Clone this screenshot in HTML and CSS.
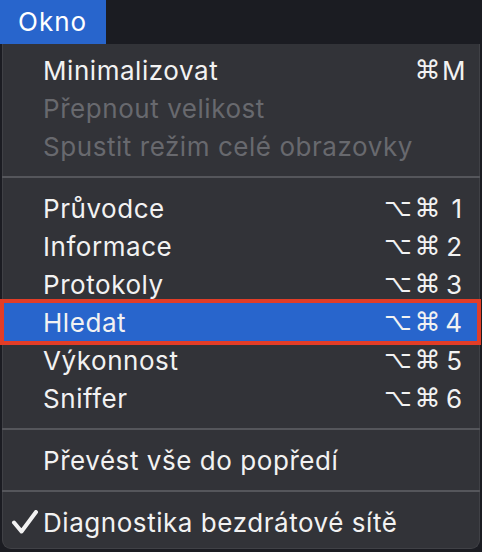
FILE: index.html
```html
<!DOCTYPE html>
<html lang="cs">
<head>
<meta charset="utf-8">
<title>Okno</title>
<link rel="stylesheet" href="styles.css">
</head>
<body>
<div class="menubar"><div class="menu-title">Okno</div></div>
<div class="menu">
  <div class="item"><span class="gutter"></span><span class="label">Minimalizovat</span><span class="keys"><span class="cmd">⌘</span><span class="key">M</span></span></div>
  <div class="item disabled"><span class="gutter"></span><span class="label">Přepnout velikost</span></div>
  <div class="item disabled"><span class="gutter"></span><span class="label">Spustit režim celé obrazovky</span></div>
  <div class="sep"></div>
  <div class="item"><span class="gutter"></span><span class="label">Průvodce</span><span class="keys"><span class="alt">⌥</span><span class="cmd">⌘</span><span class="key">1</span></span></div>
  <div class="item"><span class="gutter"></span><span class="label">Informace</span><span class="keys"><span class="alt">⌥</span><span class="cmd">⌘</span><span class="key">2</span></span></div>
  <div class="item"><span class="gutter"></span><span class="label">Protokoly</span><span class="keys"><span class="alt">⌥</span><span class="cmd">⌘</span><span class="key">3</span></span></div>
  <div class="item active"><span class="gutter"></span><span class="label">Hledat</span><span class="keys"><span class="alt">⌥</span><span class="cmd">⌘</span><span class="key">4</span></span></div>
  <div class="item"><span class="gutter"></span><span class="label">Výkonnost</span><span class="keys"><span class="alt">⌥</span><span class="cmd">⌘</span><span class="key">5</span></span></div>
  <div class="item"><span class="gutter"></span><span class="label">Sniffer</span><span class="keys"><span class="alt">⌥</span><span class="cmd">⌘</span><span class="key">6</span></span></div>
  <div class="sep"></div>
  <div class="item"><span class="gutter"></span><span class="label">Převést vše do popředí</span></div>
  <div class="sep"></div>
  <div class="item"><span class="gutter"><svg class="check" width="28" height="24" viewBox="0 0 28 24"><path d="M3 12.5 L10.5 21.5 L25 2" fill="none" stroke="#f2f2f2" stroke-width="4" stroke-linecap="round" stroke-linejoin="round"/></svg></span><span class="label">Diagnostika bezdrátové sítě</span></div>
</div>
</body>
</html>
```
FILE: styles.css
```css
html, body {
  margin: 0;
  padding: 0;
  background: #1b1c22;
  width: 482px;
  height: 552px;
  overflow: hidden;
  font-family: Inter, "Noto Sans", "DejaVu Sans", sans-serif;
  color: #f2f2f2;
}

.menubar {
  height: 44px;
  display: flex;
}

.menu-title {
  width: 106px;
  background: #2865cc;
  color: #ffffff;
  font-size: 26px;
  letter-spacing: 1px;
  line-height: 44px;
  box-sizing: border-box;
  padding-left: 18px;
}

.menu {
  margin: 0 2px;
  background: #323338;
  border: 1px solid #404146;
  border-top: none;
  border-radius: 0 0 9px 9px;
  padding: 7px 0 7px;
}

.item {
  height: 38px;
  display: flex;
  align-items: center;
  font-size: 26px;
  letter-spacing: 0.55px;
  padding-right: 17px;
}

.gutter {
  width: 40px;
  flex: none;
  display: flex;
  align-items: center;
}

.check {
  margin-left: 8px;
}

.label {
  white-space: nowrap;
}

.disabled {
  color: #68696e;
}

.active {
  background: #2865cc;
  margin: 0 2px 0 1px;
  padding-right: 15px;
  outline: 4px solid #e23d27;
}

.active .gutter {
  width: 39px;
}

.keys {
  margin-left: auto;
  display: flex;
  align-items: center;
  letter-spacing: 0;
}

.alt, .cmd {
  font-family: "DejaVu Sans", sans-serif;
  text-align: center;
}

.alt {
  font-size: 24px;
  width: 26px;
  margin-right: 3px;
}

.cmd {
  font-size: 26px;
  width: 29px;
}

.key {
  width: 20px;
  text-align: right;
}

.sep {
  height: 2px;
  background: #55565b;
  margin: 11px -1px;
}
```
